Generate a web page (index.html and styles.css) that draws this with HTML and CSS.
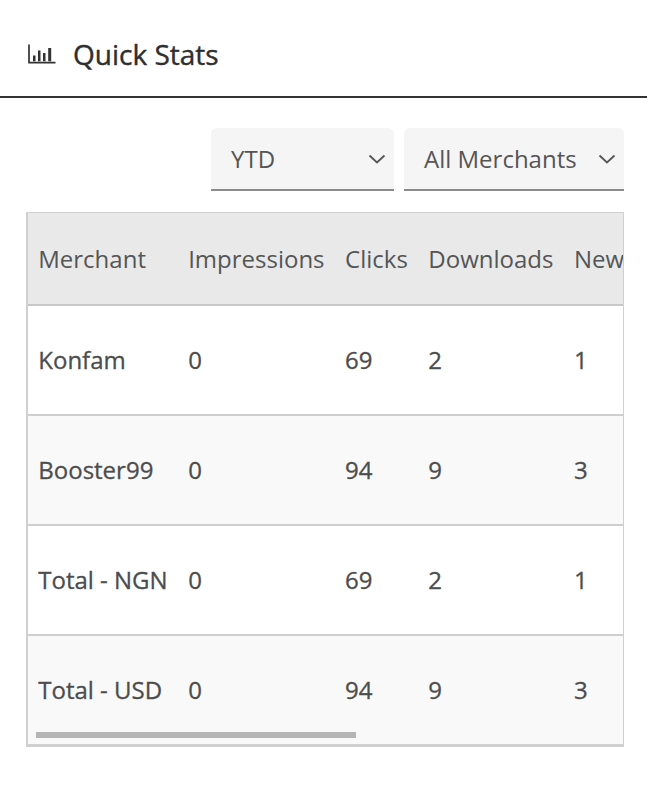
FILE: index.html
```html
<!DOCTYPE html>
<html lang="en">
<head>
<meta charset="utf-8">
<title>Quick Stats</title>
<link rel="stylesheet" href="styles.css">
</head>
<body>
<header class="page-header">
  <svg class="stats-icon" viewBox="0 0 28 20" aria-hidden="true">
    <path d="M1 0.5V18.6H27.5" fill="none" stroke="currentColor" stroke-width="1.7"/>
    <rect x="5" y="11.5" width="2.5" height="5.8" />
    <rect x="10" y="6.5" width="2.5" height="10.8" />
    <rect x="15" y="9" width="2.5" height="8.3" />
    <rect x="20.2" y="4" width="3" height="13.3" />
  </svg>
  <h1 class="title">Quick Stats</h1>
</header>
<main class="content">
  <div class="filters">
    <div class="select select-period"><span>YTD</span>
      <svg class="chevron" viewBox="0 0 18 10" aria-hidden="true"><path d="M1.5 1.5L9 8.5L16.5 1.5"/></svg>
    </div>
    <div class="select select-merchant"><span>All Merchants</span>
      <svg class="chevron" viewBox="0 0 18 10" aria-hidden="true"><path d="M1.5 1.5L9 8.5L16.5 1.5"/></svg>
    </div>
  </div>
  <div class="table-card">
    <div class="table-scroll">
      <table class="stats">
        <thead>
          <tr><th>Merchant</th><th>Impressions</th><th>Clicks</th><th>Downloads</th><th>New Users</th></tr>
        </thead>
        <tbody>
          <tr><td>Konfam</td><td>0</td><td>69</td><td>2</td><td>1</td></tr>
          <tr><td>Booster99</td><td>0</td><td>94</td><td>9</td><td>3</td></tr>
          <tr><td>Total - NGN</td><td>0</td><td>69</td><td>2</td><td>1</td></tr>
          <tr><td>Total - USD</td><td>0</td><td>94</td><td>9</td><td>3</td></tr>
        </tbody>
      </table>
    </div>
    <div class="scroll-thumb"></div>
  </div>
</main>
</body>
</html>
```
FILE: styles.css
```css
* { box-sizing: border-box; }
html, body { margin: 0; padding: 0; background: #fff; }
body {
  font-family: "Open Sans", "Liberation Sans", sans-serif;
  color: #4a4a4a;
  height: 803px;
  overflow: hidden;
}
.page-header {
  display: flex;
  align-items: center;
  height: 98px;
  padding: 12px 0 0 28px;
  border-bottom: 2px solid #333;
}
.stats-icon { width: 28px; height: 20px; color: #333; fill: currentColor; margin-right: 17px; }
.title { margin: 0; font-size: 28px; font-weight: 400; color: #2f2f2f; -webkit-text-stroke: 0.4px #2f2f2f; }
.content { padding: 30px 23px 0 26px; }
.filters { display: flex; justify-content: flex-end; gap: 10px; }
.select {
  display: flex;
  align-items: center;
  justify-content: space-between;
  height: 63px;
  padding: 0 8px 0 20px;
  background: #f5f5f5;
  border-bottom: 2px solid #8a8a8a;
  border-radius: 6px 6px 0 0;
  font-size: 24px;
  color: #555;
}
.select-period { width: 183px; }
.select-merchant { width: 220px; border-top-right-radius: 6px; }
.chevron { width: 18px; height: 10px; fill: none; stroke: #555; stroke-width: 1.8; }
.table-card {
  position: relative;
  margin-top: 21px;
  border: 2px solid #d0d0d0;
  border-top-width: 1px;
  border-right-width: 1px;
  border-bottom-width: 3px;
}
.table-scroll { overflow: hidden; }
.stats { border-collapse: collapse; white-space: nowrap; font-size: 24px; }
.stats th, .stats td { padding: 0 10.25px; text-align: left; }
.stats th { height: 92px; background: #e9e9e9; font-weight: 400; color: #555; border-bottom: 2px solid #c8c8c8; }
.stats td { height: 110px; padding-bottom: 2px; font-weight: 400; color: #4d4d4d; -webkit-text-stroke: 0.3px #4d4d4d; border-bottom: 2px solid #cfcfcf; }
.stats tbody tr:nth-child(even) td { background: #f9f9f9; }
.stats tbody tr:last-child td { height: 109px; border-bottom: 0; }
.scroll-thumb {
  position: absolute;
  left: 8px;
  bottom: 6px;
  width: 320px;
  height: 6px;
  background: #b5b5b5;
}
```
